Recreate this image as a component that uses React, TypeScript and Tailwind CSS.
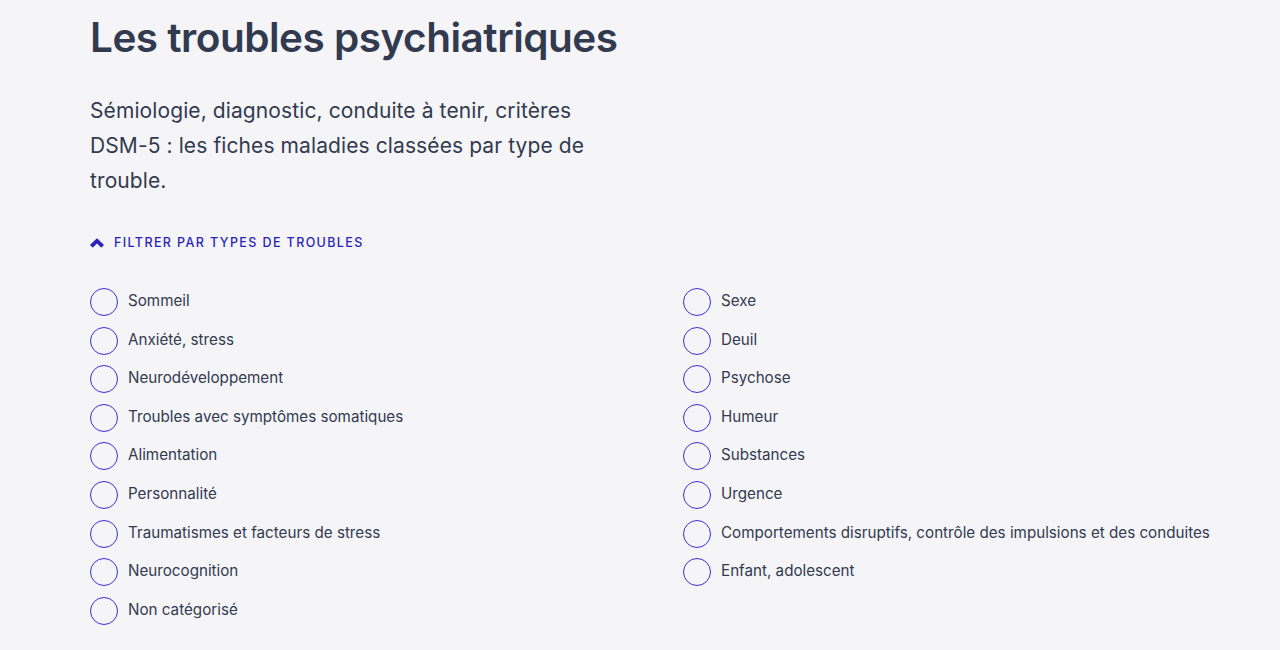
import React from "react";

const left = [
  "Sommeil",
  "Anxiété, stress",
  "Neurodéveloppement",
  "Troubles avec symptômes somatiques",
  "Alimentation",
  "Personnalité",
  "Traumatismes et facteurs de stress",
  "Neurocognition",
  "Non catégorisé",
];
const right = [
  "Sexe",
  "Deuil",
  "Psychose",
  "Humeur",
  "Substances",
  "Urgence",
  "Comportements disruptifs, contrôle des impulsions et des conduites",
  "Enfant, adolescent",
];

function Item({ label }: { label: string }) {
  return (
    <label className="flex items-center h-[28px] gap-[10px] cursor-pointer">
      <span className="w-[28px] h-[28px] rounded-full border border-[#3a2fd0] shrink-0" />
      <span className="text-[15.2px] leading-[20px] text-[#323a4f] -mt-[2px]">{label}</span>
    </label>
  );
}

export default function App() {
  return (
    <div
      className="min-h-[650px] bg-[#f5f5f8] pl-[90px] pt-[13px]"
      style={{ fontFamily: "Inter, 'Noto Sans', sans-serif" }}
    >
      <h1 className="text-[40.5px] leading-[50px] font-semibold text-[#323a4f] tracking-[-0.5px]">
        Les troubles psychiatriques
      </h1>
      <p className="mt-[30px] w-[530px] text-[21px] leading-[35px] text-[#323a4f] tracking-[0.1px]">
        Sémiologie, diagnostic, conduite à tenir, critères DSM-5 : les fiches maladies classées par type de trouble.
      </p>
      <button className="mt-[35px] flex items-center gap-[10px] h-[20px] text-[#2a1fb8]">
        <svg width="14" height="10" viewBox="0 0 14 10" className="shrink-0">
          <path d="M7 0.3 L13.6 6.6 Q14 7 13.6 7.4 L11.6 9.3 Q11.2 9.7 10.8 9.3 L7 5.6 L3.2 9.3 Q2.8 9.7 2.4 9.3 L0.4 7.4 Q0 7 0.4 6.6 Z" fill="#2e22b8" />
        </svg>
        <span className="text-[12.5px] font-medium uppercase tracking-[1.4px]">
          Filtrer par types de troubles
        </span>
      </button>
      <div className="mt-[35px] grid grid-cols-[593px_1fr]">
        <div className="flex flex-col gap-[10.6px]">
          {left.map((l) => (
            <Item key={l} label={l} />
          ))}
        </div>
        <div className="flex flex-col gap-[10.6px]">
          {right.map((l) => (
            <Item key={l} label={l} />
          ))}
        </div>
      </div>
    </div>
  );
}
